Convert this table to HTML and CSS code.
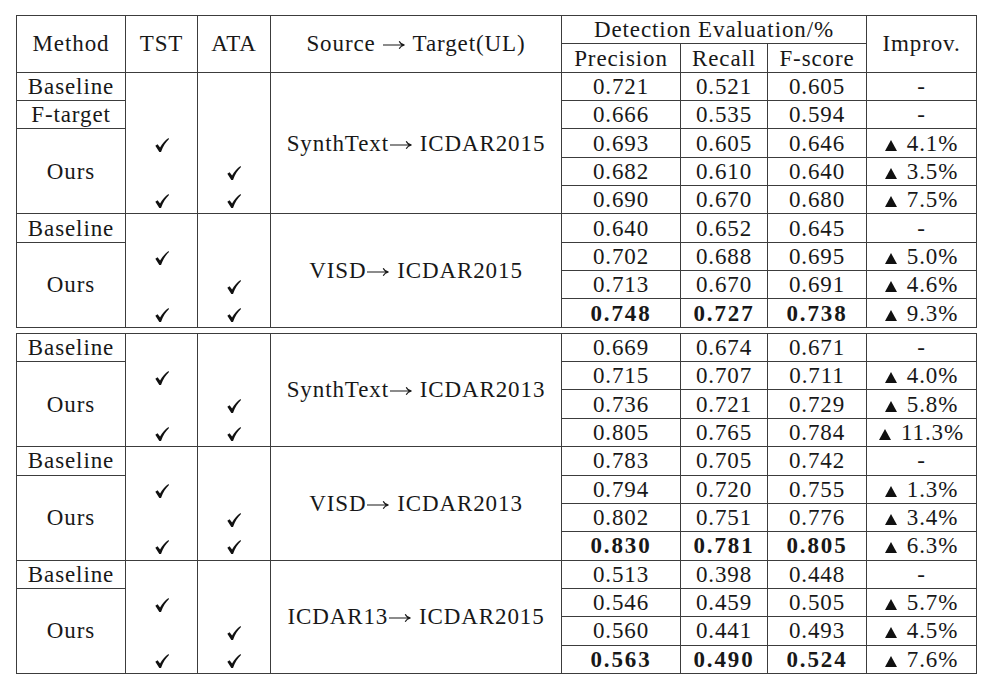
FILE: index.html
```html
<!DOCTYPE html>
<html lang="en">
<head>
<meta charset="utf-8">
<title>Detection evaluation table</title>
<link rel="stylesheet" href="styles.css">
</head>
<body>
<table class="tbl">
  <colgroup>
    <col class="c-method"><col class="c-tst"><col class="c-ata"><col class="c-src"><col class="c-p"><col class="c-r"><col class="c-f"><col class="c-imp">
  </colgroup>
  <thead>
    <tr>
      <th rowspan="2">Method</th>
      <th rowspan="2">TST</th>
      <th rowspan="2">ATA</th>
      <th rowspan="2">Source <svg class="arr" viewBox="0 0 22 10"><path d="M0 5H21.2M16.2 1.2Q17.6 4.2 21.5 5Q17.6 5.8 16.2 8.8"/></svg> Target(UL)</th>
      <th colspan="3">Detection Evaluation/%</th>
      <th rowspan="2">Improv.</th>
    </tr>
    <tr>
      <th>Precision</th><th>Recall</th><th>F-score</th>
    </tr>
  </thead>
  <tbody>
    <tr>
      <td>Baseline</td><td class="o"></td><td class="o"></td>
      <td rowspan="5">SynthText<svg class="arr" viewBox="0 0 22 10"><path d="M0 5H21.2M16.2 1.2Q17.6 4.2 21.5 5Q17.6 5.8 16.2 8.8"/></svg> ICDAR2015</td>
      <td>0.721</td><td>0.521</td><td>0.605</td><td>-</td>
    </tr>
    <tr>
      <td>F-target</td><td class="o"></td><td class="o"></td>
      <td>0.666</td><td>0.535</td><td>0.594</td><td>-</td>
    </tr>
    <tr>
      <td rowspan="3">Ours</td>
      <td class="o"><svg class="ck" viewBox="0 0 13 13"><path d="M0.3 7.3L2.4 5.8L4.7 8.9C6.9 5.2 9.7 2.1 12.5 0.1L13 0.9C10.2 3.5 7.6 7.5 5.6 12.9L4.0 12.9Z"/></svg></td>
      <td class="o"></td>
      <td>0.693</td><td>0.605</td><td>0.646</td><td><svg class="tri" viewBox="0 0 12 11"><path d="M6 0L12 11H0Z"/></svg>4.1%</td>
    </tr>
    <tr>
      <td class="o"></td>
      <td class="o"><svg class="ck" viewBox="0 0 13 13"><path d="M0.3 7.3L2.4 5.8L4.7 8.9C6.9 5.2 9.7 2.1 12.5 0.1L13 0.9C10.2 3.5 7.6 7.5 5.6 12.9L4.0 12.9Z"/></svg></td>
      <td>0.682</td><td>0.610</td><td>0.640</td><td><svg class="tri" viewBox="0 0 12 11"><path d="M6 0L12 11H0Z"/></svg>3.5%</td>
    </tr>
    <tr>
      <td><svg class="ck" viewBox="0 0 13 13"><path d="M0.3 7.3L2.4 5.8L4.7 8.9C6.9 5.2 9.7 2.1 12.5 0.1L13 0.9C10.2 3.5 7.6 7.5 5.6 12.9L4.0 12.9Z"/></svg></td>
      <td><svg class="ck" viewBox="0 0 13 13"><path d="M0.3 7.3L2.4 5.8L4.7 8.9C6.9 5.2 9.7 2.1 12.5 0.1L13 0.9C10.2 3.5 7.6 7.5 5.6 12.9L4.0 12.9Z"/></svg></td>
      <td>0.690</td><td>0.670</td><td>0.680</td><td><svg class="tri" viewBox="0 0 12 11"><path d="M6 0L12 11H0Z"/></svg>7.5%</td>
    </tr>

    <tr>
      <td>Baseline</td><td class="o"></td><td class="o"></td>
      <td rowspan="4">VISD<svg class="arr" viewBox="0 0 22 10"><path d="M0 5H21.2M16.2 1.2Q17.6 4.2 21.5 5Q17.6 5.8 16.2 8.8"/></svg> ICDAR2015</td>
      <td>0.640</td><td>0.652</td><td>0.645</td><td>-</td>
    </tr>
    <tr>
      <td rowspan="3">Ours</td>
      <td class="o"><svg class="ck" viewBox="0 0 13 13"><path d="M0.3 7.3L2.4 5.8L4.7 8.9C6.9 5.2 9.7 2.1 12.5 0.1L13 0.9C10.2 3.5 7.6 7.5 5.6 12.9L4.0 12.9Z"/></svg></td>
      <td class="o"></td>
      <td>0.702</td><td>0.688</td><td>0.695</td><td><svg class="tri" viewBox="0 0 12 11"><path d="M6 0L12 11H0Z"/></svg>5.0%</td>
    </tr>
    <tr>
      <td class="o"></td>
      <td class="o"><svg class="ck" viewBox="0 0 13 13"><path d="M0.3 7.3L2.4 5.8L4.7 8.9C6.9 5.2 9.7 2.1 12.5 0.1L13 0.9C10.2 3.5 7.6 7.5 5.6 12.9L4.0 12.9Z"/></svg></td>
      <td>0.713</td><td>0.670</td><td>0.691</td><td><svg class="tri" viewBox="0 0 12 11"><path d="M6 0L12 11H0Z"/></svg>4.6%</td>
    </tr>
    <tr>
      <td><svg class="ck" viewBox="0 0 13 13"><path d="M0.3 7.3L2.4 5.8L4.7 8.9C6.9 5.2 9.7 2.1 12.5 0.1L13 0.9C10.2 3.5 7.6 7.5 5.6 12.9L4.0 12.9Z"/></svg></td>
      <td><svg class="ck" viewBox="0 0 13 13"><path d="M0.3 7.3L2.4 5.8L4.7 8.9C6.9 5.2 9.7 2.1 12.5 0.1L13 0.9C10.2 3.5 7.6 7.5 5.6 12.9L4.0 12.9Z"/></svg></td>
      <td class="b">0.748</td><td class="b">0.727</td><td class="b">0.738</td><td><svg class="tri" viewBox="0 0 12 11"><path d="M6 0L12 11H0Z"/></svg>9.3%</td>
    </tr>
  </tbody>
</table>

<table class="tbl">
  <colgroup>
    <col class="c-method"><col class="c-tst"><col class="c-ata"><col class="c-src"><col class="c-p"><col class="c-r"><col class="c-f"><col class="c-imp">
  </colgroup>
  <tbody>
    <tr>
      <td>Baseline</td><td class="o"></td><td class="o"></td>
      <td rowspan="4">SynthText<svg class="arr" viewBox="0 0 22 10"><path d="M0 5H21.2M16.2 1.2Q17.6 4.2 21.5 5Q17.6 5.8 16.2 8.8"/></svg> ICDAR2013</td>
      <td>0.669</td><td>0.674</td><td>0.671</td><td>-</td>
    </tr>
    <tr>
      <td rowspan="3">Ours</td>
      <td class="o"><svg class="ck" viewBox="0 0 13 13"><path d="M0.3 7.3L2.4 5.8L4.7 8.9C6.9 5.2 9.7 2.1 12.5 0.1L13 0.9C10.2 3.5 7.6 7.5 5.6 12.9L4.0 12.9Z"/></svg></td>
      <td class="o"></td>
      <td>0.715</td><td>0.707</td><td>0.711</td><td><svg class="tri" viewBox="0 0 12 11"><path d="M6 0L12 11H0Z"/></svg>4.0%</td>
    </tr>
    <tr>
      <td class="o"></td>
      <td class="o"><svg class="ck" viewBox="0 0 13 13"><path d="M0.3 7.3L2.4 5.8L4.7 8.9C6.9 5.2 9.7 2.1 12.5 0.1L13 0.9C10.2 3.5 7.6 7.5 5.6 12.9L4.0 12.9Z"/></svg></td>
      <td>0.736</td><td>0.721</td><td>0.729</td><td><svg class="tri" viewBox="0 0 12 11"><path d="M6 0L12 11H0Z"/></svg>5.8%</td>
    </tr>
    <tr>
      <td><svg class="ck" viewBox="0 0 13 13"><path d="M0.3 7.3L2.4 5.8L4.7 8.9C6.9 5.2 9.7 2.1 12.5 0.1L13 0.9C10.2 3.5 7.6 7.5 5.6 12.9L4.0 12.9Z"/></svg></td>
      <td><svg class="ck" viewBox="0 0 13 13"><path d="M0.3 7.3L2.4 5.8L4.7 8.9C6.9 5.2 9.7 2.1 12.5 0.1L13 0.9C10.2 3.5 7.6 7.5 5.6 12.9L4.0 12.9Z"/></svg></td>
      <td>0.805</td><td>0.765</td><td>0.784</td><td><svg class="tri" viewBox="0 0 12 11"><path d="M6 0L12 11H0Z"/></svg>11.3%</td>
    </tr>

    <tr>
      <td>Baseline</td><td class="o"></td><td class="o"></td>
      <td rowspan="4">VISD<svg class="arr" viewBox="0 0 22 10"><path d="M0 5H21.2M16.2 1.2Q17.6 4.2 21.5 5Q17.6 5.8 16.2 8.8"/></svg> ICDAR2013</td>
      <td>0.783</td><td>0.705</td><td>0.742</td><td>-</td>
    </tr>
    <tr>
      <td rowspan="3">Ours</td>
      <td class="o"><svg class="ck" viewBox="0 0 13 13"><path d="M0.3 7.3L2.4 5.8L4.7 8.9C6.9 5.2 9.7 2.1 12.5 0.1L13 0.9C10.2 3.5 7.6 7.5 5.6 12.9L4.0 12.9Z"/></svg></td>
      <td class="o"></td>
      <td>0.794</td><td>0.720</td><td>0.755</td><td><svg class="tri" viewBox="0 0 12 11"><path d="M6 0L12 11H0Z"/></svg>1.3%</td>
    </tr>
    <tr>
      <td class="o"></td>
      <td class="o"><svg class="ck" viewBox="0 0 13 13"><path d="M0.3 7.3L2.4 5.8L4.7 8.9C6.9 5.2 9.7 2.1 12.5 0.1L13 0.9C10.2 3.5 7.6 7.5 5.6 12.9L4.0 12.9Z"/></svg></td>
      <td>0.802</td><td>0.751</td><td>0.776</td><td><svg class="tri" viewBox="0 0 12 11"><path d="M6 0L12 11H0Z"/></svg>3.4%</td>
    </tr>
    <tr>
      <td><svg class="ck" viewBox="0 0 13 13"><path d="M0.3 7.3L2.4 5.8L4.7 8.9C6.9 5.2 9.7 2.1 12.5 0.1L13 0.9C10.2 3.5 7.6 7.5 5.6 12.9L4.0 12.9Z"/></svg></td>
      <td><svg class="ck" viewBox="0 0 13 13"><path d="M0.3 7.3L2.4 5.8L4.7 8.9C6.9 5.2 9.7 2.1 12.5 0.1L13 0.9C10.2 3.5 7.6 7.5 5.6 12.9L4.0 12.9Z"/></svg></td>
      <td class="b">0.830</td><td class="b">0.781</td><td class="b">0.805</td><td><svg class="tri" viewBox="0 0 12 11"><path d="M6 0L12 11H0Z"/></svg>6.3%</td>
    </tr>

    <tr>
      <td>Baseline</td><td class="o"></td><td class="o"></td>
      <td rowspan="4">ICDAR13<svg class="arr" viewBox="0 0 22 10"><path d="M0 5H21.2M16.2 1.2Q17.6 4.2 21.5 5Q17.6 5.8 16.2 8.8"/></svg> ICDAR2015</td>
      <td>0.513</td><td>0.398</td><td>0.448</td><td>-</td>
    </tr>
    <tr>
      <td rowspan="3">Ours</td>
      <td class="o"><svg class="ck" viewBox="0 0 13 13"><path d="M0.3 7.3L2.4 5.8L4.7 8.9C6.9 5.2 9.7 2.1 12.5 0.1L13 0.9C10.2 3.5 7.6 7.5 5.6 12.9L4.0 12.9Z"/></svg></td>
      <td class="o"></td>
      <td>0.546</td><td>0.459</td><td>0.505</td><td><svg class="tri" viewBox="0 0 12 11"><path d="M6 0L12 11H0Z"/></svg>5.7%</td>
    </tr>
    <tr>
      <td class="o"></td>
      <td class="o"><svg class="ck" viewBox="0 0 13 13"><path d="M0.3 7.3L2.4 5.8L4.7 8.9C6.9 5.2 9.7 2.1 12.5 0.1L13 0.9C10.2 3.5 7.6 7.5 5.6 12.9L4.0 12.9Z"/></svg></td>
      <td>0.560</td><td>0.441</td><td>0.493</td><td><svg class="tri" viewBox="0 0 12 11"><path d="M6 0L12 11H0Z"/></svg>4.5%</td>
    </tr>
    <tr>
      <td><svg class="ck" viewBox="0 0 13 13"><path d="M0.3 7.3L2.4 5.8L4.7 8.9C6.9 5.2 9.7 2.1 12.5 0.1L13 0.9C10.2 3.5 7.6 7.5 5.6 12.9L4.0 12.9Z"/></svg></td>
      <td><svg class="ck" viewBox="0 0 13 13"><path d="M0.3 7.3L2.4 5.8L4.7 8.9C6.9 5.2 9.7 2.1 12.5 0.1L13 0.9C10.2 3.5 7.6 7.5 5.6 12.9L4.0 12.9Z"/></svg></td>
      <td class="b">0.563</td><td class="b">0.490</td><td class="b">0.524</td><td><svg class="tri" viewBox="0 0 12 11"><path d="M6 0L12 11H0Z"/></svg>7.6%</td>
    </tr>
  </tbody>
</table>
</body>
</html>
```

FILE: styles.css
```css
html, body {
  margin: 0;
  background: #ffffff;
}

body {
  padding: 15px 0 0 16px;
  font-family: "Liberation Serif", "Times New Roman", serif;
  font-size: 23px;
  letter-spacing: 0.9px;
  color: #181818;
}

.tbl {
  box-sizing: border-box;
  border-collapse: separate;
  border-spacing: 0;
  table-layout: fixed;
  width: 961px;
  border-top: 1px solid #3c3c3c;
  border-left: 1px solid #3c3c3c;
}

.tbl + .tbl {
  margin-top: 5px;
}

.c-method { width: 109px; }
.c-tst { width: 72px; }
.c-ata { width: 73px; }
.c-src { width: 291px; }
.c-p { width: 119px; }
.c-r { width: 87px; }
.c-f { width: 99px; }
.c-imp { width: 110px; }

.tbl tr {
  height: 28.35px;
}

.tbl th,
.tbl td {
  box-sizing: border-box;
  padding: 0;
  border-right: 1px solid #3c3c3c;
  border-bottom: 1px solid #3c3c3c;
  text-align: center;
  vertical-align: middle;
  line-height: 1;
  font-weight: normal;
  white-space: nowrap;
}

.tbl td.o {
  border-bottom: none;
}

.tbl td.b {
  font-weight: bold;
  letter-spacing: 1.9px;
}

.arr {
  width: 22px;
  height: 10px;
  margin: 0 1px 0 1px;
  vertical-align: 1px;
  fill: none;
  stroke: #181818;
  stroke-width: 1.1;
}

.ck {
  width: 14px;
  height: 14px;
  vertical-align: -1px;
  fill: #111111;
}

.tri {
  width: 12px;
  height: 11px;
  margin-right: 10px;
  vertical-align: 0;
  fill: #111111;
}
```
